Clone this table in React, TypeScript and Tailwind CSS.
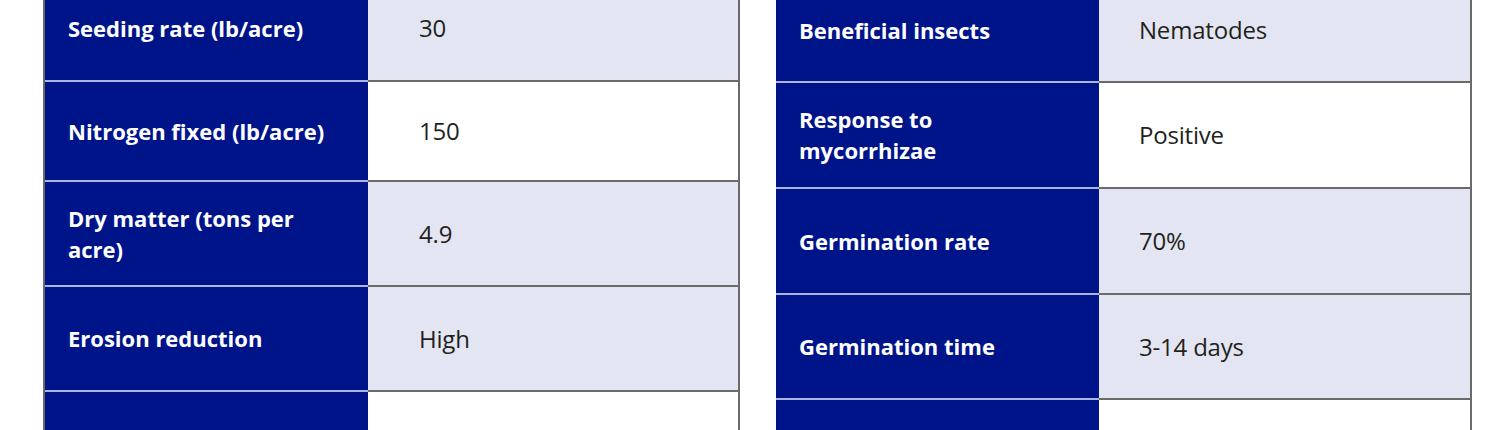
type Row = { label: string; value: string; h: number; shade: boolean };

const leftRows: Row[] = [
  { label: 'Seeding rate (lb/acre)', value: '30', h: 106, shade: true },
  { label: 'Nitrogen fixed (lb/acre)', value: '150', h: 100, shade: false },
  { label: 'Dry matter (tons per acre)', value: '4.9', h: 105, shade: true },
  { label: 'Erosion reduction', value: 'High', h: 105, shade: true },
  { label: '', value: '', h: 106, shade: false },
];

const rightRows: Row[] = [
  { label: 'Beneficial insects', value: 'Nematodes', h: 104, shade: true },
  { label: 'Response to mycorrhizae', value: 'Positive', h: 106, shade: false },
  { label: 'Germination rate', value: '70%', h: 106, shade: true },
  { label: 'Germination time', value: '3-14 days', h: 105, shade: true },
  { label: '', value: '', h: 106, shade: false },
];

function FactTable({ rows, valuePad, className }: { rows: Row[]; valuePad: string; className: string }) {
  return (
    <div className={`flex flex-col ${className}`}>
      {rows.map((r, i) => (
        <div key={i} className="flex" style={{ height: r.h }}>
          <div className="w-[323px] shrink-0 flex items-center bg-[#00148a] border-b-2 border-[#aeb5dc] pl-[23px]">
            <span className="max-w-[265px] text-white font-bold text-[22px] leading-[31px]">{r.label}</span>
          </div>
          <div
            className={`flex-1 flex items-center border-b-2 border-[#6a6a6a] ${valuePad} ${r.shade ? 'bg-[#e3e6f2]' : 'bg-white'}`}
          >
            <span className="text-[#231f20] text-[24px] leading-[30px] tracking-[-0.2px]">{r.value}</span>
          </div>
        </div>
      ))}
    </div>
  );
}

export default function App() {
  return (
    <div
      className="w-[1500px] h-[430px] overflow-hidden bg-white flex items-start"
      style={{ fontFamily: '"Open Sans", Lato, sans-serif' }}
    >
      <FactTable
        rows={leftRows}
        valuePad="pl-[51px]"
        className="ml-[43px] w-[697px] -mt-[24px] border-l-2 border-r-2 border-[#6a6a6a]"
      />
      <FactTable
        rows={rightRows}
        valuePad="pl-[40px]"
        className="ml-[36px] w-[696px] -mt-[21px] border-r-2 border-[#6a6a6a]"
      />
    </div>
  );
}
